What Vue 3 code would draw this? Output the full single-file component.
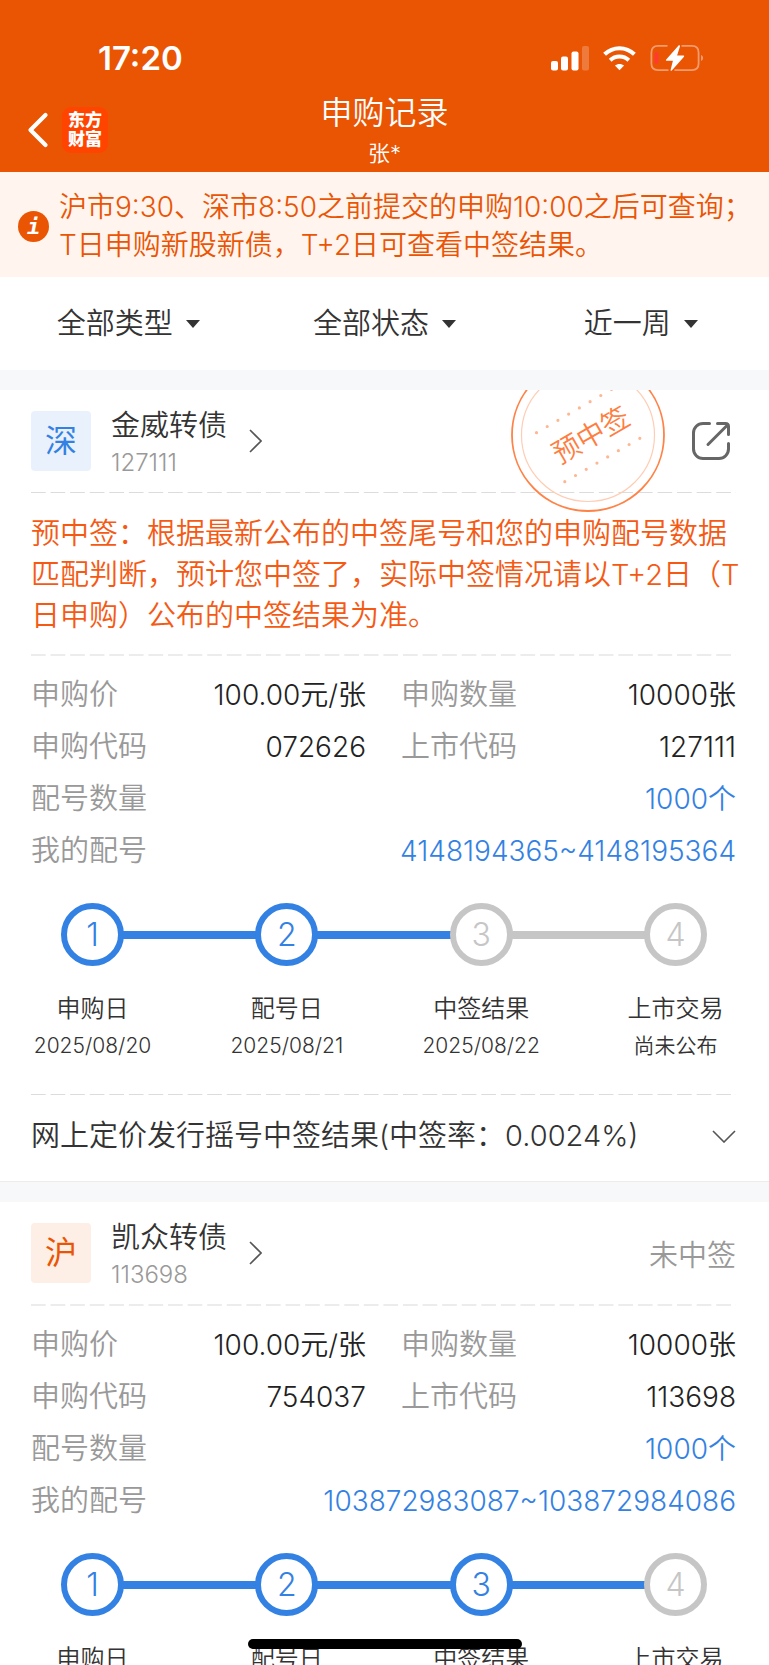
<script setup>
const filters = [
  { id: 'type', label: '类型', value: '全部类型' },
  { id: 'status', label: '状态', value: '全部状态' },
  { id: 'range', label: '时间', value: '近一周' }
]

const warning = [
  '预中签：根据最新公布的中签尾号和您的申购配号数据',
  '匹配判断，预计您中签了，实际中签情况请以T+2日（T',
  '日申购）公布的中签结果为准。'
]

const records = [
  {
    market: '深',
    tone: 'sz',
    name: '金威转债',
    code: '127111',
    stamp: '预中签',
    warning,
    rows: [
      { label: '申购价', value: '100.00元/张' },
      { label: '申购数量', value: '10000张' },
      { label: '申购代码', value: '072626' },
      { label: '上市代码', value: '127111' },
      { label: '配号数量', value: '1000个', link: true },
      { label: '我的配号', value: '4148194365~4148195364', link: true }
    ],
    steps: [
      { name: '申购日', note: '2025/08/20', done: true },
      { name: '配号日', note: '2025/08/21', done: true },
      { name: '中签结果', note: '2025/08/22', done: false },
      { name: '上市交易', note: '尚未公布', done: false }
    ],
    summary: '网上定价发行摇号中签结果(中签率：0.0024%)'
  },
  {
    market: '沪',
    tone: 'sh',
    name: '凯众转债',
    code: '113698',
    status: '未中签',
    rows: [
      { label: '申购价', value: '100.00元/张' },
      { label: '申购数量', value: '10000张' },
      { label: '申购代码', value: '754037' },
      { label: '上市代码', value: '113698' },
      { label: '配号数量', value: '1000个', link: true },
      { label: '我的配号', value: '103872983087~103872984086', link: true }
    ],
    steps: [
      { name: '申购日', done: true },
      { name: '配号日', done: true },
      { name: '中签结果', done: true },
      { name: '上市交易', done: false }
    ]
  }
]
</script>

<template>
  <div class="page" lang="zh-CN">
    <header class="top">
      <div class="status-bar">
        <span class="clock">17:20</span>
        <svg class="status-icons" width="156" height="28" viewBox="0 0 156 28" aria-hidden="true">
          <g fill="#fff">
            <rect x="1" y="17" width="7" height="9.500" rx="2" />
            <rect x="11" y="12.500" width="7" height="14" rx="2" />
            <rect x="21.500" y="7.500" width="7" height="19" rx="2" />
            <rect x="32" y="2" width="7" height="24.500" rx="2" opacity=".22" />
            <path d="M69.500 26.300l-4.600-4.700c2.600-2.200 6.600-2.200 9.200 0z" />
          </g>
          <g fill="none" stroke="#fff" stroke-width="4">
            <path d="M54.600 10.300c8.400-8.200 21.400-8.200 29.800 0" />
            <path d="M60.200 16.200c5.200-5 13.400-5 18.600 0" />
          </g>
          <g fill="none" stroke="#fff" stroke-opacity=".42" stroke-width="1.800">
            <path d="M117.500 1.900H108q-6.600 0-6.600 6.600v11q0 6.600 6.600 6.600h10.500M131.500 1.900H142q6.600 0 6.600 6.600v11q0 6.600-6.600 6.600h-17.500" />
          </g>
          <path d="M151 11c2.800.8 2.800 5.200 0 6z" fill="#fff" fill-opacity=".42" />
          <rect x="104.500" y="8" width="4" height="12" rx="2" fill="#ff3b30" />
          <path d="M128.800 1.300L116 15.700q-.6 1 .6 1h6.300l-2.300 9.200q0 1.500 1.200.6L134 12.700q.6-1.100-.6-1.100h-6.300l2.900-9.300q.2-1.500-1.200-1z" fill="#fff" />
        </svg>
      </div>
      <div class="nav">
        <div class="nav-left">
          <button class="back" type="button" aria-label="返回">
            <svg width="22" height="36" viewBox="0 0 22 36" aria-hidden="true">
              <path d="M18.500 3L3.500 18l15 15" fill="none" stroke="#fff" stroke-width="4.200" stroke-linejoin="round" stroke-linecap="round" />
            </svg>
          </button>
          <span class="logo"><span>东方</span><span>财富</span></span>
        </div>
        <div class="heading">
          <h1>申购记录</h1>
          <p>张*</p>
        </div>
      </div>
    </header>

    <section class="notice">
      <span class="info" aria-hidden="true">i</span>
      <p>
        <span>沪市9:30、深市8:50之前提交的申购10:00之后可查询；</span>
        <span>T日申购新股新债，T+2日可查看中签结果。</span>
      </p>
    </section>

    <nav class="filters">
      <label v-for="f in filters" :key="f.id" class="filter" :for="f.id">
        <select :id="f.id" :aria-label="f.label">
          <option>{{ f.value }}</option>
        </select>
        <svg width="14" height="8" viewBox="0 0 14 8" aria-hidden="true">
          <path d="M0 0h14L7 8z" fill="#333" />
        </svg>
      </label>
    </nav>

    <main>
      <article v-for="r in records" :key="r.code" class="card">
        <svg v-if="r.stamp" class="stamp" width="156" height="156" viewBox="0 0 156 156" role="img" :aria-label="r.stamp">
          <circle cx="78" cy="78" r="76" fill="none" stroke="#ff8247" stroke-width="1.800" />
          <circle cx="78" cy="78" r="66.500" fill="none" stroke="#ffcdb4" stroke-width="1.200" />
          <g stroke="#ffb692" stroke-width="3.200" stroke-linecap="round" stroke-dasharray="0 12.380">
            <path d="M26.500 75.700l75.200-43.500" />
            <path d="M54.800 124.700l75.200-43.500" />
          </g>
          <text x="81" y="78" dy="10" text-anchor="middle" transform="rotate(-30 81 78)">{{ r.stamp }}</text>
        </svg>

        <header class="card-head">
          <span class="badge" :class="r.tone">{{ r.market }}</span>
          <a class="bond" href="#">
            <span class="bond-text">
              <span class="bond-name">{{ r.name }}</span>
              <span class="bond-code">{{ r.code }}</span>
            </span>
            <svg width="13" height="24" viewBox="0 0 13 24" aria-hidden="true">
              <path d="M1 1l11 11L1 23" fill="none" stroke="#555" stroke-width="1.600" />
            </svg>
          </a>
          <span v-if="r.status" class="result">{{ r.status }}</span>
          <button v-else class="share" type="button" aria-label="分享">
            <svg width="42" height="42" viewBox="0 0 42 42" fill="none" stroke="#666" stroke-width="3" stroke-linecap="round" aria-hidden="true">
              <path d="M19.500 3.500H13a9.500 9.500 0 0 0-9.500 9.500v16a9.500 9.500 0 0 0 9.500 9.500h16a9.500 9.500 0 0 0 9.500-9.500v-5.500" />
              <path d="M27.500 3.500H35.500q3 0 3 3v8" />
              <path d="M18 24.500L37.500 5" />
            </svg>
          </button>
        </header>

        <template v-if="r.warning">
          <div class="dash"></div>
          <p class="warning"><span v-for="line in r.warning" :key="line">{{ line }}</span></p>
        </template>
        <div class="dash soft"></div>

        <dl class="facts">
          <div v-for="row in r.rows" :key="row.label" :class="{ wide: row.link }">
            <dt>{{ row.label }}</dt>
            <dd><a v-if="row.link" href="#">{{ row.value }}</a><template v-else>{{ row.value }}</template></dd>
          </div>
        </dl>

        <ol class="steps">
          <template v-for="(s, i) in r.steps" :key="s.name">
            <li v-if="i" class="bar" :class="{ done: r.steps[i - 1].done }" role="presentation"></li>
            <li class="step" :class="{ done: s.done }">
              <span class="dot">{{ i + 1 }}</span>
              <span class="step-name">{{ s.name }}</span>
              <span v-if="s.note" class="step-note">{{ s.note }}</span>
            </li>
          </template>
        </ol>

        <template v-if="r.summary">
          <div class="dash"></div>
          <button class="summary" type="button">
            <span>{{ r.summary }}</span>
            <svg width="24" height="13" viewBox="0 0 24 13" aria-hidden="true">
              <path d="M1 1l11 11L23 1" fill="none" stroke="#555" stroke-width="1.600" />
            </svg>
          </button>
        </template>
      </article>
    </main>

    <div class="home-bar"></div>
  </div>
</template>

<style>
body {
  margin: 0;
  background: #fff;
}
</style>

<style scoped>
.page {
  height: 100vh;
  overflow: hidden;
  background: #fff;
  color: #333;
  font-family: Inter, "Noto Sans CJK SC", sans-serif;
  font-size: 29px;
  font-weight: 350;
}
h1, p, dl, dd, ol {
  margin: 0;
  padding: 0;
}
a {
  color: inherit;
  text-decoration: none;
}
button, select {
  margin: 0;
  padding: 0;
  border: 0;
  background: none;
  color: inherit;
  font: inherit;
  text-align: left;
}
svg {
  display: block;
  flex: none;
}

.top {
  background: #ea5504;
  color: #fff;
}
.status-bar {
  display: flex;
  justify-content: space-between;
  align-items: center;
  box-sizing: border-box;
  height: 88px;
  padding: 28px 63px 0 98px;
}
.clock {
  font-size: 33px;
  font-weight: 600;
}
.nav {
  display: grid;
  grid-template-columns: 1fr auto 1fr;
  height: 84px;
}
.nav-left {
  display: flex;
  align-items: center;
  gap: 13px;
  padding-left: 27px;
}
.logo {
  display: flex;
  flex-direction: column;
  justify-content: center;
  align-items: center;
  width: 46px;
  height: 46px;
  border-radius: 9px;
  background: #ff4400;
  font-size: 17px;
  font-weight: 900;
  line-height: 19px;
}
.heading {
  text-align: center;
}
.heading h1 {
  font-size: 32px;
  font-weight: 350;
  line-height: 50px;
}
.heading p {
  font-size: 22px;
  line-height: 30px;
}

.notice {
  display: flex;
  align-items: center;
  gap: 10px;
  padding: 16px 18px 13px;
  background: #fff4ee;
  color: #ea5504;
  font-size: 28px;
  line-height: 38px;
}
.notice p span,
.warning span {
  display: block;
  white-space: nowrap;
}
.info {
  flex: none;
  width: 31px;
  height: 31px;
  border-radius: 50%;
  background: #ea5504;
  color: #fff;
  font: italic 700 22px/31px "DejaVu Sans Mono", monospace;
  text-align: center;
}

.filters {
  display: grid;
  grid-template-columns: repeat(3, 1fr);
  justify-items: center;
  align-items: center;
  height: 93px;
  border-bottom: 20px solid #f7f8fa;
}
.filter {
  display: flex;
  align-items: center;
  gap: 12px;
}
.filter select {
  appearance: none;
  line-height: 42px;
}

.card {
  position: relative;
  overflow: hidden;
}
.card + .card {
  border-top: 1px solid #ececec;
}
.card + .card::before {
  content: "";
  display: block;
  height: 20px;
  background: #f7f8fa;
}
.stamp {
  position: absolute;
  top: -33px;
  right: 103px;
}
.stamp text {
  fill: #ff7d40;
  font-size: 28px;
}
.card-head {
  display: flex;
  align-items: center;
  height: 102px;
  padding: 0 33px 0 31px;
}
.badge {
  width: 60px;
  height: 60px;
  border-radius: 4px;
  font-size: 32px;
  font-weight: 400;
  line-height: 60px;
  text-align: center;
}
.badge.sz {
  background: #e9f2fc;
  color: #3381e3;
}
.badge.sh {
  background: #fdeee6;
  color: #ea5504;
}
.bond {
  display: flex;
  align-items: center;
  gap: 22px;
  margin-left: 20px;
  margin-right: auto;
}
.bond-text {
  display: flex;
  flex-direction: column;
  padding-top: 6px;
  line-height: 37px;
}
.bond-code {
  color: #999;
  font-size: 24px;
}
.result {
  color: #999;
}
.share {
  margin-right: 4px;
}

.dash {
  height: 1px;
  margin: 0 33px 0 31px;
  background: linear-gradient(to right, #dcdcdc 76%, transparent 76%) 0 0 / calc(100% / 36) 100% repeat-x;
}
.dash.soft {
  height: 2px;
  background-image: linear-gradient(to right, #ececec 76%, transparent 76%);
}
.warning {
  padding: 20px 33px 18px 31px;
  color: #f55a14;
  line-height: 41px;
}

.facts {
  display: grid;
  grid-template-columns: 1fr 1fr;
  column-gap: 35px;
  padding: 13px 33px 0 31px;
  line-height: 52px;
}
.facts div {
  display: flex;
  justify-content: space-between;
  white-space: nowrap;
}
.facts .wide {
  grid-column: 1 / -1;
}
.facts dt {
  color: #999;
}
.facts dd {
  color: #222;
  font-size: 28px;
}
.facts a {
  color: #3381e3;
}

.steps {
  display: flex;
  padding: 26px 62px 29px 61px;
  list-style: none;
}
.step {
  display: flex;
  flex-direction: column;
  align-items: center;
  width: 63px;
  white-space: nowrap;
}
.dot {
  box-sizing: border-box;
  width: 63px;
  height: 63px;
  margin-bottom: 25px;
  border: 6px solid #c6c6c6;
  border-radius: 50%;
  color: #c6c6c6;
  font-size: 32px;
  font-weight: 300;
  line-height: 51px;
  text-align: center;
}
.step.done .dot {
  border-color: #3381e3;
  color: #3381e3;
}
.bar {
  flex: 1;
  height: 8px;
  margin: 28px -1px 0;
  background: #c6c6c6;
}
.bar.done {
  background: #3381e3;
}
.step-name {
  font-size: 24px;
  line-height: 36px;
}
.step-note {
  font-size: 21px;
  line-height: 38px;
}

.summary {
  display: flex;
  justify-content: space-between;
  align-items: center;
  width: 100%;
  padding: 20px 33px 24px 31px;
  line-height: 42px;
}

.home-bar {
  position: fixed;
  bottom: 16px;
  left: 50%;
  width: 274px;
  height: 10px;
  margin-left: -137px;
  border-radius: 5px;
  background: #000;
}
</style>
